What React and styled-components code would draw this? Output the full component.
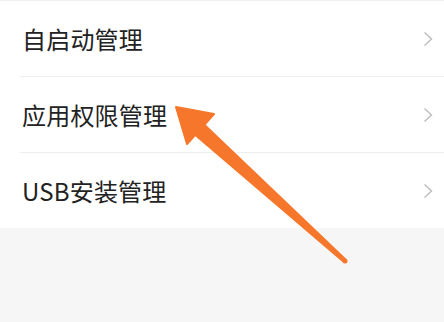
import React from "react";
import styled, { createGlobalStyle } from "styled-components";

const Global = createGlobalStyle`
  html, body { margin: 0; padding: 0; background: #f6f6f6; }
  body { font-family: "Noto Sans CJK SC", "Noto Sans", sans-serif; }
`;

const Page = styled.div`
  position: relative;
  width: 444px;
  height: 322px;
  background: #f6f6f6;
  overflow: hidden;
`;

const List = styled.div`
  background: #ffffff;
  border-top: 1px solid #f0f0f0;
`;

const Row = styled.div`
  display: flex;
  align-items: center;
  justify-content: space-between;
  height: 75px;
  margin-left: 20px;
  padding: 0 11px 0 2px;
  border-bottom: ${(p) => (p.$last ? "none" : "1px solid #eeeeee")};
`;

const Label = styled.span`
  font-size: 24px;
  color: #222222;
  letter-spacing: 0.2px;
  line-height: 1;
`;

const Chevron = () => (
  <svg width="10" height="16" viewBox="0 0 10 16">
    <path d="M1.5 1.5 L8.5 8 L1.5 14.5" fill="none" stroke="#bdbdbd" strokeWidth="1.4" />
  </svg>
);

const Arrow = styled.svg`
  position: absolute;
  left: 0;
  top: 0;
  pointer-events: none;
`;

const items = ["自启动管理", "应用权限管理", "USB安装管理"];

export default function App() {
  return (
    <Page>
      <Global />
      <List>
        {items.map((t, i) => (
          <Row key={t} $last={i === items.length - 1}>
            <Label>{t}</Label>
            <Chevron />
          </Row>
        ))}
      </List>
      <Arrow width="444" height="322" viewBox="0 0 444 322">
        <polygon points="176,107 214,114 187,144" fill="#f6772b" strokeLinejoin="round" stroke="#f6772b" strokeWidth="2" />
        <polygon points="205,124 195,136 343.3,262.8 346.7,259.2" fill="#f6772b" />
        <circle cx="345" cy="261" r="2.5" fill="#f6772b" />
      </Arrow>
    </Page>
  );
}
